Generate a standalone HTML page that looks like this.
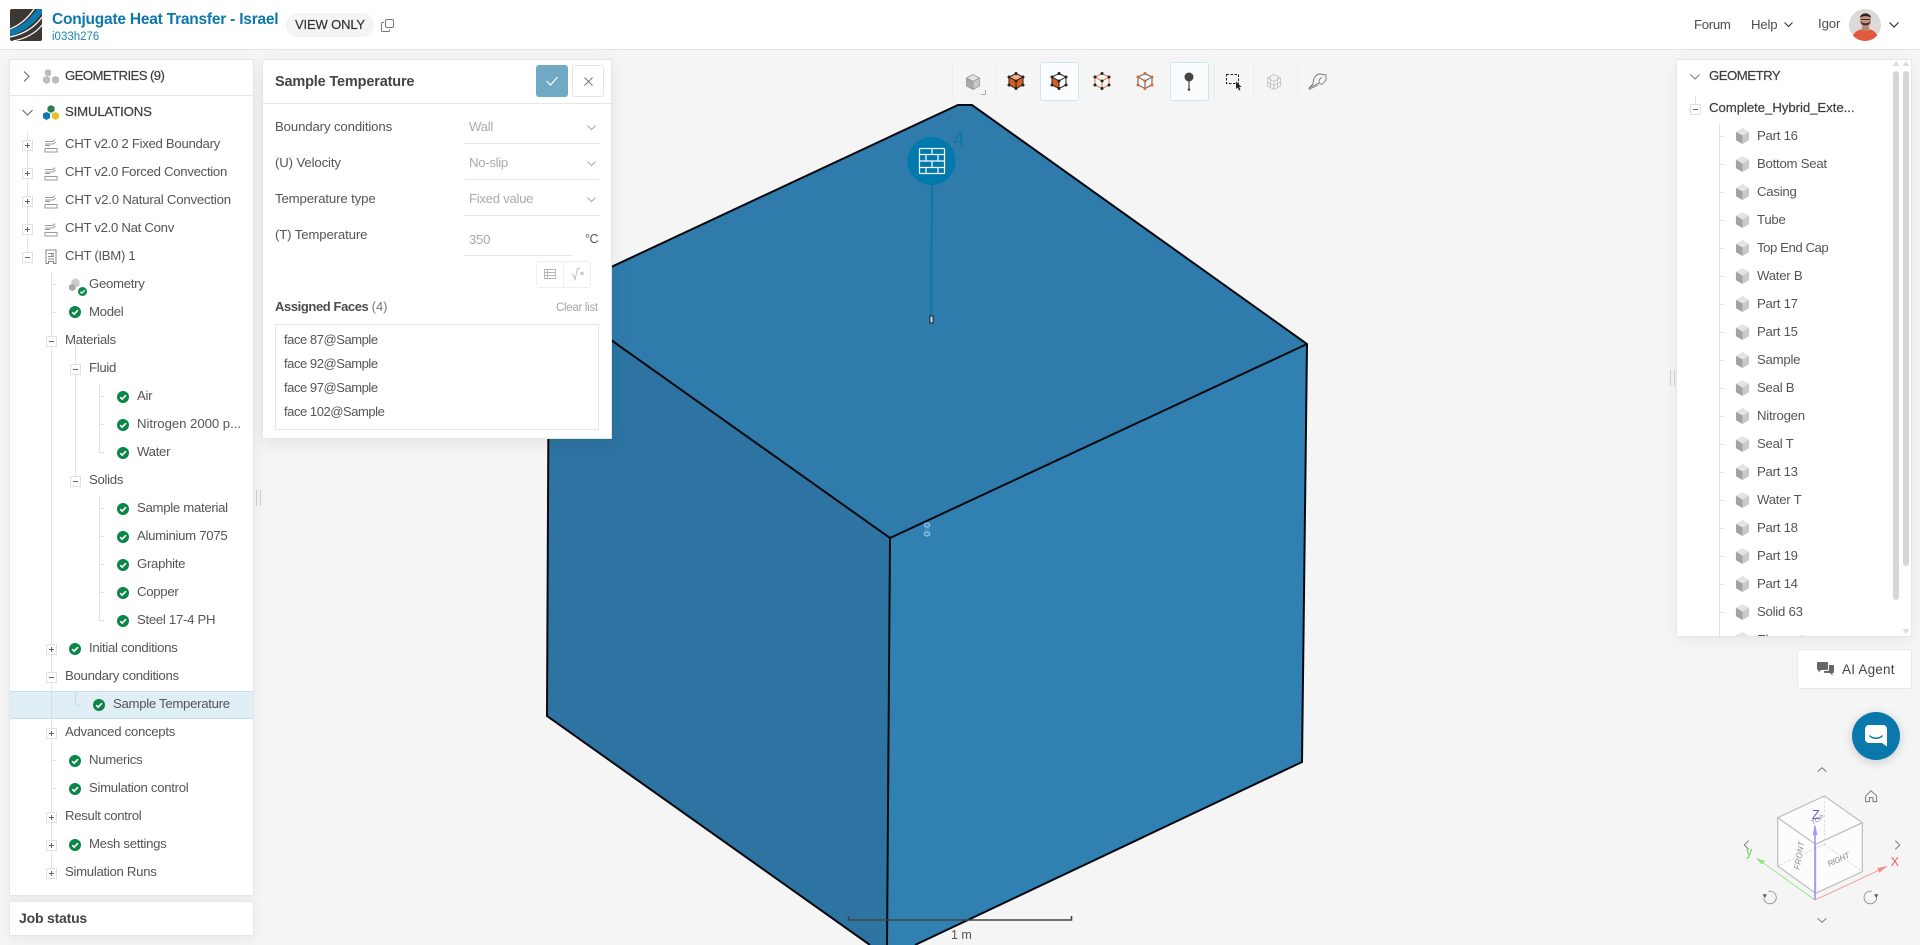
<!DOCTYPE html>
<html><head><meta charset="utf-8"><title>Conjugate Heat Transfer - Israel</title>
<style>
*{box-sizing:border-box}
html,body{margin:0;padding:0}
body{width:1920px;height:945px;overflow:hidden;background:#f5f5f5;font-family:"Liberation Sans",sans-serif;position:relative;color:#4d4d4d}
.a{position:absolute}
.t{position:absolute;font-size:13.2px;line-height:20px;height:20px;white-space:nowrap;letter-spacing:-.3px;color:#555}
.panel{position:absolute;background:#fff;border:1px solid #e6e6e6;box-shadow:0 4px 14px rgba(0,0,0,.05)}
.box{position:absolute;width:11px;height:11px;background:#fff;border:1px solid #e0e0e0}
.box:before{content:"";position:absolute;left:2px;top:4px;width:5px;height:1px;background:#666}
.box.p:after{content:"";position:absolute;left:4px;top:2px;width:1px;height:5px;background:#666}
.v{position:absolute;width:1px;background:#e3e3e3}
.h{position:absolute;height:1px;width:4px;background:#e3e3e3}
svg{position:absolute;overflow:visible}
.lbl{position:absolute;left:275px;font-size:13.2px;letter-spacing:-.13px;line-height:20px;color:#555;white-space:nowrap}
.val{position:absolute;left:469px;font-size:13.2px;letter-spacing:-.3px;line-height:20px;color:#aaa;white-space:nowrap}
.ul{position:absolute;height:1px;background:#e6e6e6}
.it{position:absolute;left:284px;font-size:13px;letter-spacing:-.45px;line-height:20px;color:#555;white-space:nowrap}
.g{position:absolute;left:1757px;font-size:13.2px;letter-spacing:-.25px;line-height:20px;color:#555;white-space:nowrap}
.sep{position:absolute;top:62px;width:1px;height:38px;background:#ececec}
</style></head>
<body>
<svg width="0" height="0" style="position:absolute">
<defs>
<symbol id="ok" viewBox="0 0 12 12"><circle cx="6" cy="6" r="6" fill="#0b8647"/><path d="M3.2 6.2 5.2 8.2 8.9 4.2" fill="none" stroke="#fff" stroke-width="1.7"/></symbol>
<symbol id="cu" viewBox="0 0 16 17"><path d="M8 0 15 4 8 8 1 4Z" fill="#e4e4e4"/><path d="M1 4 8 8V17L1 13Z" fill="#a3a3a3"/><path d="M15 4 8 8V17L15 13Z" fill="#c9c9c9"/></symbol>
<symbol id="fl" viewBox="0 0 14 16" ><path d="M1 11.5H13V15H1ZM1 8.5 6 8.5M1 4.5H9L11 2.5M1 7 9 7 12 5" fill="none" stroke="#999" stroke-width="1"/></symbol>
</defs>
</svg>

<!-- 3D model -->
<svg style="left:0;top:0" width="1920" height="945" viewBox="0 0 1920 945">
<path d="M958 105H972L1307 344 890 538 549 296Z" fill="#2f7bab"/>
<path d="M549 296 890 538 887 945H870L547 716Z" fill="#2d74a2"/>
<path d="M890 538 1307 344 1302 762 915 945H887Z" fill="#3080b2"/>
<g fill="none" stroke="#08080f" stroke-width="2">
<path d="M549 296 930 118 958 105H972L1307 344 1302 762 915 945"/>
<path d="M549 296 890 538 1307 344M890 538 887 945M549 296 547 716 870 945"/>
</g>
<path d="M927 523V536" stroke="#5ba4cc" stroke-width="5" opacity=".45"/>
<g fill="none" stroke="#9fcde4" stroke-width="1"><ellipse cx="927" cy="525" rx="2.8" ry="2"/><ellipse cx="927" cy="534" rx="2.8" ry="2"/></g>
<path d="M932 184 931 319" stroke="#0779ab" stroke-width="2"/>
<rect x="930" y="316" width="3" height="7" fill="#d8e3ea" stroke="#111" stroke-width=".9"/>
<circle cx="931.500" cy="161" r="24" fill="#0079ad"/>
<g fill="none" stroke="#fff" stroke-width="1.2"><rect x="919.500" y="148.500" width="25" height="25" rx="1"/><path d="M919.500 154.500H944.500M919.500 161H944.500M919.500 167.500H944.500M932 148.500V154.500M926 154.500V161M938 154.500V161M932 161V167.500M926 167.500V173.500M938 167.500V173.500"/></g>
<text x="953" y="146" font-family="Liberation Sans" font-size="21" fill="#0b77ab">4</text>
<path d="M848.500 916V920H1071.500V916" fill="none" stroke="#444" stroke-width="1.600"/>
<text x="951" y="939" font-family="Liberation Sans" font-size="12.500" fill="#555">1 m</text>
</svg>

<!-- Header -->
<div class="a" style="left:0;top:0;width:1920px;height:50px;background:#fff;border-bottom:1.500px solid #e4e4e4"></div>
<svg style="left:10px;top:9px" width="32" height="32" viewBox="0 0 32 32">
<rect width="32" height="32" rx="2" fill="#3d3833"/>
<path d="M0 21C11 18 20 10 27 0H32V4C25 14 14 23 0 27Z" fill="#0a7bb0"/>
<path d="M24 0C18 9 10 16 0 20" fill="none" stroke="#fff" stroke-width="1.200"/>
<path d="M0 28C14 25 25 18 32 8" fill="none" stroke="#fff" stroke-width="1.200"/>
<path d="M3 32C15 30 26 24 32 16" fill="none" stroke="#fff" stroke-width="1.200"/>
</svg>
<div class="a" style="left:52px;top:10px;font-size:15.500px;font-weight:700;letter-spacing:-.22px;line-height:20px;color:#0c78ab;white-space:nowrap">Conjugate Heat Transfer - Israel</div>
<div class="a" style="left:52px;top:29px;font-size:11.500px;line-height:16px;color:#1b84b7;white-space:nowrap">i033h276</div>
<div class="a" style="left:286px;top:13px;width:88px;height:24px;border-radius:12px;background:#f4f4f4;text-align:center;font-size:13px;line-height:24px;letter-spacing:-.15px;color:#333;-webkit-text-stroke:.2px #333">VIEW ONLY</div>
<svg style="left:381px;top:19px" width="13" height="13" viewBox="0 0 13 13" fill="none" stroke="#777"><rect x="4.500" y=".5" width="8" height="8" rx="1.500"/><path d="M3 3.500H1.500A1 1 0 0 0 .5 4.500V11.500A1 1 0 0 0 1.500 12.500H7.500A1 1 0 0 0 8.500 11.500V10.500"/></svg>
<div class="t" style="left:1694px;top:15px;color:#4d4d4d;letter-spacing:-.3px">Forum</div>
<div class="t" style="left:1751px;top:15px;color:#4d4d4d;letter-spacing:-.2px">Help</div>
<svg style="left:1784px;top:22px" width="9" height="6" fill="none" stroke="#333" stroke-width="1.100"><path d="M.5 .5 4.500 4.500 8.500 .5"/></svg>
<div class="t" style="left:1818px;top:14px;color:#4d4d4d;letter-spacing:-.1px">Igor</div>
<svg style="left:1849px;top:9px" width="32" height="32" viewBox="0 0 32 32">
<clipPath id="av"><circle cx="16" cy="16" r="16"/></clipPath>
<g clip-path="url(#av)"><rect width="32" height="32" fill="#dcd9d8"/>
<path d="M3 32C3 24 8 21 14 20H19C25 21 29 24 29 32Z" fill="#e2583a"/>
<rect x="13" y="16" width="7" height="6" fill="#b98670"/>
<ellipse cx="16.500" cy="11" rx="5.500" ry="7" fill="#c8957c"/>
<path d="M11 9C11 3 22 3 22 9 20 6.500 13 6.500 11 9Z" fill="#2c2522"/>
<path d="M11.300 12C12 18 21 18 21.700 12 20 15 13 15 11.300 12Z" fill="#40302a"/>
<path d="M12 10.500H21" stroke="#333" stroke-width="1"/></g></svg>
<svg style="left:1889px;top:22px" width="10" height="6" fill="none" stroke="#333" stroke-width="1.200"><path d="M.5 .5 5 5 9.500 .5"/></svg>

<!-- Left panel -->
<div class="panel" style="left:9px;top:59px;width:245px;height:837px"></div>
<div class="a" style="left:9px;top:95px;width:245px;height:1px;background:#e6e6e6"></div>
<svg style="left:23px;top:71px" width="7" height="11" fill="none" stroke="#666"><path d="M1 .5 6 5.500 1 10.500"/></svg>
<svg style="left:22px;top:109px" width="11" height="7" fill="none" stroke="#666"><path d="M.5 1 5.500 6 10.500 1"/></svg>
<svg style="left:43px;top:69px" width="16" height="15" viewBox="0 0 16 15"><path d="M5 0 8 1.500V6L5 7.500 2 6V1.500ZM0 8.500 3.500 7 7 8.500V13L3.500 15 0 13ZM9 8.500 12.500 7 16 8.500V13L12.500 15 9 13Z" fill="#bdbdbd"/></svg>
<svg style="left:43px;top:105px" width="16" height="15" viewBox="0 0 16 15"><path d="M8 0 11.500 2V6L8 8 4.500 6V2Z" fill="#2b7e4f"/><path d="M0 8.500 3.500 7 7 8.500V13L3.500 15 0 13Z" fill="#0a7bb0"/><path d="M9 8.500 12.500 7 16 8.500V13L12.500 15 9 13Z" fill="#e3c22e"/></svg>
<div class="t" style="left:65px;top:66px;font-weight:400;color:#3d3d3d;-webkit-text-stroke:.2px #3d3d3d;letter-spacing:-.6px">GEOMETRIES (9)</div>
<div class="t" style="left:65px;top:102px;color:#3d3d3d;-webkit-text-stroke:.2px #3d3d3d;letter-spacing:-.15px">SIMULATIONS</div>

<!-- tree lines -->
<div class="v" style="left:27px;top:132px;height:124px"></div>
<div class="v" style="left:51px;top:272px;height:600px"></div>
<div class="v" style="left:75px;top:344px;height:136px"></div>
<div class="v" style="left:99px;top:384px;height:69px"></div>
<div class="v" style="left:99px;top:496px;height:125px"></div>
<div class="v" style="left:75px;top:692px;height:13px"></div>
<div class="h" style="left:52px;top:284px"></div><div class="h" style="left:52px;top:312px"></div><div class="h" style="left:52px;top:760px"></div><div class="h" style="left:52px;top:788px"></div>
<div class="h" style="left:100px;top:396px"></div><div class="h" style="left:100px;top:424px"></div><div class="h" style="left:100px;top:452px"></div>
<div class="h" style="left:100px;top:508px"></div><div class="h" style="left:100px;top:536px"></div><div class="h" style="left:100px;top:564px"></div><div class="h" style="left:100px;top:592px"></div><div class="h" style="left:100px;top:620px"></div>

<div class="a" style="left:10px;top:691px;width:243px;height:28px;background:#e0eef5;border-top:1px solid #c3deec;border-bottom:1px solid #c3deec"></div>
<div class="v" style="left:51px;top:691px;height:28px;background:#d3dfe5"></div>
<div class="v" style="left:75px;top:692px;height:13px;background:#c9d9e2"></div>
<div class="h" style="left:76px;top:705px;background:#c9d9e2"></div>

<div class="box p" style="left:22px;top:140px"></div><div class="box p" style="left:22px;top:168px"></div><div class="box p" style="left:22px;top:196px"></div><div class="box p" style="left:22px;top:224px"></div><div class="box" style="left:22px;top:252px"></div>
<div class="box" style="left:46px;top:336px"></div><div class="box" style="left:70px;top:364px"></div><div class="box" style="left:70px;top:476px"></div>
<div class="box p" style="left:46px;top:644px"></div><div class="box" style="left:46px;top:672px"></div><div class="box p" style="left:46px;top:728px"></div><div class="box p" style="left:46px;top:812px"></div><div class="box p" style="left:46px;top:840px"></div><div class="box p" style="left:46px;top:868px"></div>

<svg style="left:44px;top:137px" width="14" height="16"><use href="#fl"/></svg>
<svg style="left:44px;top:165px" width="14" height="16"><use href="#fl"/></svg>
<svg style="left:44px;top:193px" width="14" height="16"><use href="#fl"/></svg>
<svg style="left:44px;top:221px" width="14" height="16"><use href="#fl"/></svg>
<svg style="left:44px;top:249px" width="14" height="16" fill="none" stroke="#888"><path d="M2 14.500V1H12V14.500H9.500V12.500H4.500V14.500ZM4 4.500H10M4 7.500H10M7 6H10M4 10H10"/></svg>

<div class="t" style="left:65px;top:134px">CHT v2.0 2 Fixed Boundary</div>
<div class="t" style="left:65px;top:162px">CHT v2.0 Forced Convection</div>
<div class="t" style="left:65px;top:190px;letter-spacing:-.2px">CHT v2.0 Natural Convection</div>
<div class="t" style="left:65px;top:218px">CHT v2.0 Nat Conv</div>
<div class="t" style="left:65px;top:246px">CHT (IBM) 1</div>

<svg style="left:69px;top:278px" width="13" height="14" viewBox="0 0 16 17"><path d="M8 0 13 3V9L8 12 3 9V3Z" fill="#ccc"/><path d="M0 9 4 7 8 9V14L4 16 0 14Z" fill="#aaa"/></svg>
<svg style="left:78px;top:287px" width="9" height="9"><use href="#ok"/></svg>
<div class="t" style="left:89px;top:274px">Geometry</div>
<svg style="left:69px;top:306px" width="12" height="12"><use href="#ok"/></svg>
<div class="t" style="left:89px;top:302px">Model</div>
<div class="t" style="left:65px;top:330px">Materials</div>
<div class="t" style="left:89px;top:358px">Fluid</div>
<svg style="left:117px;top:391px" width="12" height="12"><use href="#ok"/></svg><div class="t" style="left:137px;top:386px">Air</div>
<svg style="left:117px;top:419px" width="12" height="12"><use href="#ok"/></svg><div class="t" style="left:137px;top:414px;letter-spacing:-.05px">Nitrogen 2000 p...</div>
<svg style="left:117px;top:447px" width="12" height="12"><use href="#ok"/></svg><div class="t" style="left:137px;top:442px">Water</div>
<div class="t" style="left:89px;top:470px">Solids</div>
<svg style="left:117px;top:503px" width="12" height="12"><use href="#ok"/></svg><div class="t" style="left:137px;top:498px">Sample material</div>
<svg style="left:117px;top:531px" width="12" height="12"><use href="#ok"/></svg><div class="t" style="left:137px;top:526px">Aluminium 7075</div>
<svg style="left:117px;top:559px" width="12" height="12"><use href="#ok"/></svg><div class="t" style="left:137px;top:554px">Graphite</div>
<svg style="left:117px;top:587px" width="12" height="12"><use href="#ok"/></svg><div class="t" style="left:137px;top:582px">Copper</div>
<svg style="left:117px;top:615px" width="12" height="12"><use href="#ok"/></svg><div class="t" style="left:137px;top:610px">Steel 17-4 PH</div>
<svg style="left:69px;top:643px" width="12" height="12"><use href="#ok"/></svg><div class="t" style="left:89px;top:638px">Initial conditions</div>
<div class="t" style="left:65px;top:666px">Boundary conditions</div>
<svg style="left:93px;top:699px" width="12" height="12"><use href="#ok"/></svg><div class="t" style="left:113px;top:694px">Sample Temperature</div>
<div class="t" style="left:65px;top:722px">Advanced concepts</div>
<svg style="left:69px;top:755px" width="12" height="12"><use href="#ok"/></svg><div class="t" style="left:89px;top:750px">Numerics</div>
<svg style="left:69px;top:783px" width="12" height="12"><use href="#ok"/></svg><div class="t" style="left:89px;top:778px">Simulation control</div>
<div class="t" style="left:65px;top:806px">Result control</div>
<svg style="left:69px;top:839px" width="12" height="12"><use href="#ok"/></svg><div class="t" style="left:89px;top:834px">Mesh settings</div>
<div class="t" style="left:65px;top:862px">Simulation Runs</div>

<div class="panel" style="left:9px;top:901px;width:245px;height:35px"></div>
<div class="a" style="left:19px;top:908px;font-size:14px;font-weight:700;letter-spacing:-.2px;line-height:20px;color:#444">Job status</div>
<div class="a" style="left:256px;top:490px;width:5px;height:16px;border-left:1px solid #ccc;border-right:1px solid #ccc"></div>

<!-- Sample panel -->
<div class="panel" style="left:262px;top:59px;width:350px;height:380px;box-shadow:0 5px 16px rgba(0,0,0,.08)"></div>
<div class="a" style="left:263px;top:103px;width:348px;height:1px;background:#e6e6e6"></div>
<div class="a" style="left:275px;top:72px;font-size:14.500px;font-weight:700;letter-spacing:-.17px;line-height:20px;color:#444;white-space:nowrap">Sample Temperature</div>
<div class="a" style="left:536px;top:65px;width:32px;height:32px;background:#70a9c4;border-radius:3px"></div>
<svg style="left:546px;top:76px" width="12" height="10" fill="none" stroke="#fff" stroke-width="1.200"><path d="M.5 5 4.500 9 11.500 1"/></svg>
<div class="a" style="left:572px;top:65px;width:32px;height:32px;background:#fff;border:1px solid #e4e4e4;border-radius:3px"></div>
<svg style="left:584px;top:77px" width="9" height="9" fill="none" stroke="#777"><path d="M.5 .5 8.500 8.500M8.500 .5 .5 8.500"/></svg>

<div class="lbl" style="top:117px">Boundary conditions</div>
<div class="lbl" style="top:153px">(U) Velocity</div>
<div class="lbl" style="top:189px">Temperature type</div>
<div class="lbl" style="top:225px">(T) Temperature</div>
<div class="val" style="top:117px">Wall</div>
<div class="val" style="top:153px">No-slip</div>
<div class="val" style="top:189px">Fixed value</div>
<div class="val" style="top:230px">350</div>
<div class="ul" style="left:465px;top:143px;width:134px"></div>
<div class="ul" style="left:465px;top:179px;width:134px"></div>
<div class="ul" style="left:465px;top:215px;width:134px"></div>
<div class="ul" style="left:465px;top:255px;width:108px"></div>
<svg style="left:587px;top:125px" width="9" height="6" fill="none" stroke="#aaa"><path d="M.5 .5 4.500 4.500 8.500 .5"/></svg>
<svg style="left:587px;top:161px" width="9" height="6" fill="none" stroke="#aaa"><path d="M.5 .5 4.500 4.500 8.500 .5"/></svg>
<svg style="left:587px;top:197px" width="9" height="6" fill="none" stroke="#aaa"><path d="M.5 .5 4.500 4.500 8.500 .5"/></svg>
<div class="a" style="left:585px;top:229px;font-size:12.500px;letter-spacing:-.5px;line-height:20px;color:#555">°C</div>
<div class="a" style="left:536px;top:261px;width:55px;height:27px;border:1px solid #eeeeee;border-radius:3px;background:#fff"></div>
<div class="a" style="left:563px;top:261px;width:1px;height:27px;background:#eeeeee"></div>
<svg style="left:544px;top:269px" width="12" height="10" fill="none" stroke="#b5b5b5" stroke-width=".9"><path d="M.5 .5H11.500V9.500H.5ZM.5 3.500H11.500M.5 6.500H11.500M3.500 .5V9.500"/></svg>
<svg style="left:571px;top:268px" width="13" height="12" fill="none" stroke="#b5b5b5" stroke-width=".9"><path d="M.5 7 2 6.500 4 11.500 6.500 .5H9M9.500 4 12.500 7M12.500 4 9.500 7"/></svg>

<div class="a" style="left:275px;top:297px;font-size:13px;font-weight:700;letter-spacing:-.4px;line-height:20px;color:#4d4d4d;white-space:nowrap">Assigned Faces <span style="font-weight:400;color:#777;letter-spacing:0">(4)</span></div>
<div class="a" style="left:556px;top:298px;font-size:11.500px;letter-spacing:-.3px;line-height:20px;color:#a5a5a5;white-space:nowrap">Clear list</div>
<div class="a" style="left:275px;top:324px;width:324px;height:106px;border:1px solid #e6e6e6"></div>
<div class="it" style="top:330px">face 87@Sample</div>
<div class="it" style="top:354px">face 92@Sample</div>
<div class="it" style="top:378px">face 97@Sample</div>
<div class="it" style="top:402px">face 102@Sample</div>

<!-- Toolbar -->
<div class="sep" style="left:952px"></div><div class="sep" style="left:996px"></div><div class="sep" style="left:1214px"></div><div class="sep" style="left:1253px"></div><div class="sep" style="left:1297px"></div>
<div class="a" style="left:1040px;top:62px;width:39px;height:39px;background:#fafcfd;border:1px solid #cfe5f0;border-radius:3px"></div>
<div class="a" style="left:1170px;top:62px;width:39px;height:39px;background:#fafcfd;border:1px solid #cfe5f0;border-radius:3px"></div>
<svg style="left:966px;top:74px" width="14" height="16" viewBox="0 0 14 16" stroke="#999" stroke-width=".8"><path d="M7 .5 13.500 4 7 7.500 .5 4Z" fill="#e4e4e4"/><path d="M.5 4 7 7.500V15.500L.5 12Z" fill="#aaa"/><path d="M13.500 4 7 7.500V15.500L13.500 12Z" fill="#c9c9c9"/></svg>
<svg style="left:981px;top:90px" width="5" height="5" fill="none" stroke="#aaa"><path d="M4.500 0V4.500H0"/></svg>
<svg style="left:1008px;top:72px" width="16" height="18" viewBox="0 0 16 18" stroke="#222" stroke-width="1"><path d="M8 1.500 15 5 8 9 1 5Z" fill="#f2ab82"/><path d="M1 5 8 9V16.500L1 13Z" fill="#d95f20"/><path d="M15 5 8 9V16.500L15 13Z" fill="#d95f20"/><g fill="#222" stroke="none"><circle cx="8" cy="1.500" r="1.500"/><circle cx="15" cy="5" r="1.500"/><circle cx="15" cy="13" r="1.500"/><circle cx="8" cy="16.500" r="1.500"/><circle cx="1" cy="13" r="1.500"/><circle cx="1" cy="5" r="1.500"/><circle cx="8" cy="9" r="1.500"/></g></svg>
<svg style="left:1051px;top:72px" width="16" height="18" viewBox="0 0 16 18" stroke="#222" stroke-width="1"><path d="M8 1.500 15 5 8 9 1 5Z" fill="#fff"/><path d="M1 5 8 9V16.500L1 13Z" fill="#d95f20"/><path d="M15 5 8 9V16.500L15 13Z" fill="#fff"/><g fill="#222" stroke="none"><circle cx="8" cy="1.500" r="1.500"/><circle cx="15" cy="5" r="1.500"/><circle cx="15" cy="13" r="1.500"/><circle cx="8" cy="16.500" r="1.500"/><circle cx="1" cy="13" r="1.500"/><circle cx="1" cy="5" r="1.500"/><circle cx="8" cy="9" r="1.500"/></g></svg>
<svg style="left:1094px;top:72px" width="16" height="18" viewBox="0 0 16 18" stroke="#e0763d" fill="none" stroke-width="1"><path d="M8 1.500 15 5V13L8 16.500 1 13V5ZM1 5 8 9 15 5M8 9V16.500"/><g fill="#222" stroke="none"><circle cx="8" cy="1.500" r="1.500"/><circle cx="15" cy="5" r="1.500"/><circle cx="15" cy="13" r="1.500"/><circle cx="8" cy="16.500" r="1.500"/><circle cx="1" cy="13" r="1.500"/><circle cx="1" cy="5" r="1.500"/><circle cx="8" cy="9" r="1.500"/></g></svg>
<svg style="left:1137px;top:72px" width="16" height="18" viewBox="0 0 16 18" stroke="#555" fill="none" stroke-width="1"><path d="M8 1.500 15 5V13L8 16.500 1 13V5ZM1 5 8 9 15 5M8 9V16.500"/><g fill="#e0652a" stroke="none"><circle cx="8" cy="1.500" r="1.500"/><circle cx="15" cy="5" r="1.500"/><circle cx="15" cy="13" r="1.500"/><circle cx="8" cy="16.500" r="1.500"/><circle cx="1" cy="13" r="1.500"/><circle cx="1" cy="5" r="1.500"/><circle cx="8" cy="9" r="1.500"/></g></svg>
<svg style="left:1183px;top:72px" width="12" height="20" viewBox="0 0 12 20"><circle cx="6" cy="5" r="4.500" fill="#444"/><path d="M6 9V17" stroke="#444" stroke-width="1.200"/><circle cx="6" cy="17.500" r="1.300" fill="#444"/></svg>
<svg style="left:1226px;top:74px" width="16" height="17" viewBox="0 0 16 17"><rect x=".5" y=".5" width="12" height="9" fill="none" stroke="#222" stroke-dasharray="2.500 1.500"/><path d="M10 7.500V15L11.800 13.500 13 16.500 14.500 15.800 13.200 13H15.500Z" fill="#222"/></svg>
<svg style="left:1267px;top:74px" width="14" height="16" viewBox="0 0 14 16" fill="none" stroke="#c4c4c4" stroke-width=".9"><path d="M7 .5 13.500 4V12L7 15.500 .5 12V4ZM.5 4 7 7.500 13.500 4M7 7.500V15.500M3.500 2.500V13.500M10.500 2.500V13.500M.5 8 7 11.500 13.500 8"/></svg>
<svg style="left:1308px;top:73px" width="19" height="18" viewBox="0 0 19 18" fill="none" stroke="#777" stroke-width=".9"><path d="M5 11C5 5 8 1 12 1L18 2V7L14 11.500 11 10C11 7 12 5 14 4.500M1 15 11 10M1 16.500 10 12M1 15V16.500M5 11 1 15"/></svg>

<!-- Right panel -->
<div class="panel" style="left:1676px;top:59px;width:236px;height:578px;overflow:hidden"></div>
<svg style="left:1690px;top:74px" width="10" height="6" fill="none" stroke="#777"><path d="M.5 .5 5 5 9.500 .5"/></svg>
<div class="t" style="left:1709px;top:66px;color:#3d3d3d;-webkit-text-stroke:.2px #3d3d3d;letter-spacing:-.5px">GEOMETRY</div>
<div class="v" style="left:1695px;top:96px;height:8px"></div>
<div class="box" style="left:1690px;top:104px"></div>
<div class="t" style="left:1709px;top:98px;color:#3d3d3d;-webkit-text-stroke:.2px #3d3d3d;letter-spacing:-.05px">Complete_Hybrid_Exte...</div>
<div class="v" style="left:1719px;top:124px;height:512px"></div>
<div class="h" style="left:1720px;top:136px"></div><div class="h" style="left:1720px;top:164px"></div><div class="h" style="left:1720px;top:192px"></div><div class="h" style="left:1720px;top:220px"></div><div class="h" style="left:1720px;top:248px"></div><div class="h" style="left:1720px;top:276px"></div><div class="h" style="left:1720px;top:304px"></div><div class="h" style="left:1720px;top:332px"></div><div class="h" style="left:1720px;top:360px"></div><div class="h" style="left:1720px;top:388px"></div><div class="h" style="left:1720px;top:416px"></div><div class="h" style="left:1720px;top:444px"></div><div class="h" style="left:1720px;top:472px"></div><div class="h" style="left:1720px;top:500px"></div><div class="h" style="left:1720px;top:528px"></div><div class="h" style="left:1720px;top:556px"></div><div class="h" style="left:1720px;top:584px"></div><div class="h" style="left:1720px;top:612px"></div>
<svg style="left:1735px;top:128px" width="15" height="16"><use href="#cu"/></svg><div class="g" style="top:126px">Part 16</div>
<svg style="left:1735px;top:156px" width="15" height="16"><use href="#cu"/></svg><div class="g" style="top:154px">Bottom Seat</div>
<svg style="left:1735px;top:184px" width="15" height="16"><use href="#cu"/></svg><div class="g" style="top:182px">Casing</div>
<svg style="left:1735px;top:212px" width="15" height="16"><use href="#cu"/></svg><div class="g" style="top:210px">Tube</div>
<svg style="left:1735px;top:240px" width="15" height="16"><use href="#cu"/></svg><div class="g" style="top:238px;letter-spacing:-.45px">Top End Cap</div>
<svg style="left:1735px;top:268px" width="15" height="16"><use href="#cu"/></svg><div class="g" style="top:266px">Water B</div>
<svg style="left:1735px;top:296px" width="15" height="16"><use href="#cu"/></svg><div class="g" style="top:294px">Part 17</div>
<svg style="left:1735px;top:324px" width="15" height="16"><use href="#cu"/></svg><div class="g" style="top:322px">Part 15</div>
<svg style="left:1735px;top:352px" width="15" height="16"><use href="#cu"/></svg><div class="g" style="top:350px">Sample</div>
<svg style="left:1735px;top:380px" width="15" height="16"><use href="#cu"/></svg><div class="g" style="top:378px">Seal B</div>
<svg style="left:1735px;top:408px" width="15" height="16"><use href="#cu"/></svg><div class="g" style="top:406px">Nitrogen</div>
<svg style="left:1735px;top:436px" width="15" height="16"><use href="#cu"/></svg><div class="g" style="top:434px">Seal T</div>
<svg style="left:1735px;top:464px" width="15" height="16"><use href="#cu"/></svg><div class="g" style="top:462px">Part 13</div>
<svg style="left:1735px;top:492px" width="15" height="16"><use href="#cu"/></svg><div class="g" style="top:490px">Water T</div>
<svg style="left:1735px;top:520px" width="15" height="16"><use href="#cu"/></svg><div class="g" style="top:518px">Part 18</div>
<svg style="left:1735px;top:548px" width="15" height="16"><use href="#cu"/></svg><div class="g" style="top:546px">Part 19</div>
<svg style="left:1735px;top:576px" width="15" height="16"><use href="#cu"/></svg><div class="g" style="top:574px">Part 14</div>
<svg style="left:1735px;top:604px" width="15" height="16"><use href="#cu"/></svg><div class="g" style="top:602px">Solid 63</div>
<div class="a" style="left:1735px;top:632px;width:15px;height:4px;overflow:hidden"><svg style="left:0;top:0" width="15" height="16"><use href="#cu"/></svg></div>
<div class="a" style="left:1757px;top:630px;width:60px;height:6px;overflow:hidden"><div style="font-size:13.200px;letter-spacing:-.25px;line-height:20px;color:#555">Elements</div></div>
<div class="a" style="left:1893px;top:71px;width:6px;height:529px;background:#d6d6d6;border-radius:3px"></div>
<div class="a" style="left:1903px;top:71px;width:6px;height:495px;background:#d6d6d6;border-radius:3px"></div>
<svg style="left:1892px;top:61px" width="18" height="6" fill="#ddd"><path d="M4 0 7.500 5H.5ZM14 0 17.500 5H10.500Z"/></svg>
<svg style="left:1902px;top:629px" width="8" height="5" fill="#ddd"><path d="M.5 0H7.500L4 5Z"/></svg>
<div class="a" style="left:1670px;top:370px;width:5px;height:16px;border-left:1px solid #ccc;border-right:1px solid #ccc"></div>

<div class="a" style="left:1797px;top:649px;width:115px;height:40px;background:#fff;border:1px solid #e8e8e8;border-radius:3px"></div>
<svg style="left:1817px;top:662px" width="17" height="14" viewBox="0 0 17 14" fill="#666"><path d="M1 0H10A1 1 0 0 1 11 1V7A1 1 0 0 1 10 8H4L1.500 10.500V8H1A1 1 0 0 1 0 7V1A1 1 0 0 1 1 0Z"/><path d="M12 3H16A1 1 0 0 1 17 4V10A1 1 0 0 1 16 11H15.500V13.500L13 11H8A1 1 0 0 1 7 10V9H10.500A1.500 1.500 0 0 0 12 7.500Z"/></svg>
<div class="a" style="left:1842px;top:660px;font-size:13.500px;line-height:20px;letter-spacing:.2px;color:#444;white-space:nowrap">AI Agent</div>

<div class="a" style="left:1852px;top:712px;width:48px;height:48px;border-radius:50%;background:#0a78ab;box-shadow:0 2px 10px rgba(0,0,0,.18)"></div>
<svg style="left:1865px;top:725px" width="22" height="22" viewBox="0 0 22 22"><path d="M4 0H18A4 4 0 0 1 22 4V21.500L17 18H4A4 4 0 0 1 0 14V4A4 4 0 0 1 4 0Z" fill="#fff"/><path d="M5 11C8 14 14 14 17 11" fill="none" stroke="#0a78ab" stroke-width="1.500" stroke-linecap="round"/></svg>

<!-- Nav cube -->
<svg style="left:1720px;top:750px" width="200" height="195" viewBox="0 0 600 585">
<path d="M313 138 427 218V365L287 430 173 348V203Z" fill="#fcfcfc"/>
<g fill="none" stroke="#bbb" stroke-width="3.500"><path d="M313 138 427 218V365L287 430 173 348V203ZM173 203 287 283 427 218M287 283V430"/></g>
<g fill="none" stroke="#d4d4d4" stroke-width="2.500" stroke-dasharray="8 6"><path d="M313 138V283M313 283 173 348M313 283 427 365"/></g>
<g font-family="Liberation Sans" font-style="italic" fill="#8a8a8a" font-size="24">
<text transform="translate(238 360) rotate(-80)" textLength="85">FRONT</text>
<text transform="translate(327 350) rotate(-24)" textLength="70">RIGHT</text>
<text transform="translate(278 225) rotate(-30)" font-size="20">TOP</text>
</g>
<path d="M285 450 110 325" stroke="#8be37a" stroke-width="2.500"/><path d="M108 324 135 333 125 343Z" fill="#8be37a"/>
<path d="M285 450 500 350" stroke="#f58d8d" stroke-width="2.500"/><path d="M503 348 478 368 472 354Z" fill="#f58d8d"/>
<path d="M285 450V230" stroke="#9a9afc" stroke-width="5"/><path d="M285 222 292 255H278Z" fill="#9a9afc"/>
<text x="276" y="207" font-family="Liberation Sans" font-size="38" fill="#5a5ae8">Z</text>
<text x="512" y="348" font-family="Liberation Sans" font-size="38" fill="#f2605f">X</text>
<text x="78" y="318" font-family="Liberation Sans" font-size="38" fill="#5fd84e">y</text>
<g fill="none" stroke="#666" stroke-width="2.500">
<path d="M293 65 306 53 319 65M293 505 306 517 319 505M86 272 73 285 86 298M526 272 539 285 526 298"/>
<path d="M437 155V138L453 122 470 138V155H459V143H448V155Z"/>
</g>
<g fill="none" stroke="#888" stroke-width="2.500"><path d="M145 424A19 19 0 1 1 131 445"/><path d="M456 424A19 19 0 1 0 470 445"/></g>
<path d="M128 432 141 433 134 445ZM475 432 462 433 469 445Z" fill="#666"/>
</svg>
</body></html>
